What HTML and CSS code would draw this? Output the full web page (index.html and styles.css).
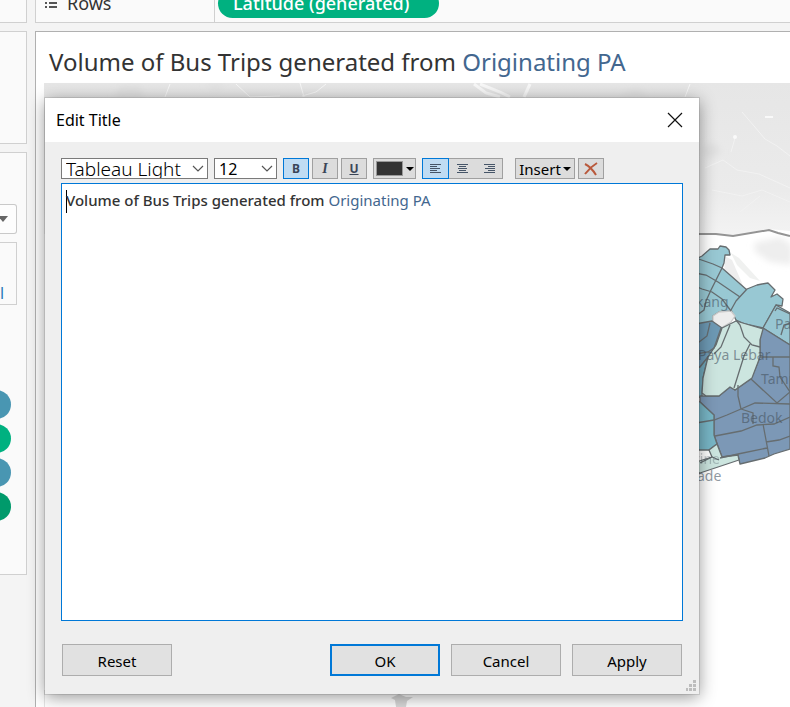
FILE: index.html
```html
<!DOCTYPE html>
<html lang="en">
<head>
<meta charset="utf-8">
<meta name="viewport" content="width=device-width, initial-scale=1">
<title>Volume of Bus Trips</title>
<link rel="stylesheet" href="styles.css">
</head>
<body>
<div class="app">
  <aside class="sidebar">
    <section class="card card-pages"></section>
    <section class="card card-filters"></section>
    <section class="card card-marks">
      <button class="mark-type" aria-label="Mark type"><svg width="10" height="6" viewBox="0 0 10 6"><path d="M0 0h10L5 6z" fill="#666"/></svg></button>
      <div class="mark-cell"><a href="#">l</a></div>
      <div class="pills">
        <span class="dot blue"></span>
        <span class="dot green"></span>
        <span class="dot blue"></span>
        <span class="dot dark"></span>
      </div>
    </section>
  </aside>
  <main class="main">
    <section class="shelf">
      <div class="shelf-label">
        <svg width="13" height="13" viewBox="0 0 13 13" fill="#555"><path d="M0 1h2v2H0zM4 1h8v2H4zM0 5h2v2H0zM4 5h8v2H4zM0 9h2v2H0zM4 9h8v2H4z"/></svg>
        <span>Rows</span>
      </div>
      <div class="shelf-content"><span class="pill">Latitude (generated)</span></div>
    </section>
    <section class="view">
      <h1 class="view-title">Volume of Bus Trips generated from <span>Originating PA</span></h1>
      <div class="map">
        <svg viewBox="44 83 746 624" preserveAspectRatio="xMinYMin slice" role="img" aria-label="Map of planning areas">
          <defs>
            <linearGradient id="land" x1="0" y1="0" x2="0" y2="1"><stop offset="0" stop-color="#e6e6e6"/><stop offset=".7" stop-color="#ebebeb"/><stop offset="1" stop-color="#f3f3f3"/></linearGradient>
            <filter id="soft"><feGaussianBlur stdDeviation="3"/></filter>
          </defs>
          <rect x="44" y="83" width="746" height="624" fill="#fff"/>
          <path d="M44 83H790V231L768 229 732 236 690 234H44z" fill="url(#land)"/>
          <g fill="#dcdcdc" filter="url(#soft)">
            <path d="M120 86h20l4 12h-30zM205 84h20l-8 6zM625 92l12-4 12 8h-30zM702 148l12-6 8 10-14 8z" fill="#e0e0e0"/>
            <path d="M754 243l26-6 12 8v20l-22-3-15-10z" fill="#eee"/>
          </g>
          <g fill="none" stroke="#f8f8f8">
            <path d="M170 84l-5 13M236 84l14 13 30-1M300 83l4 14M326 84l-10 8-14 4M690 84l-5 13"/>
            <path d="M474 84l12 9 14 4M480 84l20 8 10 5M530 84l-6 13" stroke-width="3"/>
            <path d="M742 112l12 14 11 13 12 7 13 10M735 138l-4 14M705 168l18-8 14 10 22 4 31 14M712 190l30 6 20-6 28 12M740 212l20-16" stroke="#f2f2f2"/>
          </g>
          <path d="M765 117h8" stroke="#f9f9f9" stroke-width="2"/>
          <circle cx="735" cy="137" r="2" fill="#fafafa"/>
          <path d="M690 234L716 234 733 236 769 230 778 233 790 236" fill="none" stroke="#949494" stroke-width="2"/>
          <path d="M731 253L739 258 760 281 750 278 737 265z" fill="#f0f1f0"/>
          <path d="M725 256L732 260 745 290 724 275z" fill="#eee"/>
          <g stroke="#666d70" stroke-width="1.3" stroke-linejoin="round">
            <path d="M690 262L702 256 710 249 718 249 720 246 726 247 729 250 730 255 725 255 724 263 722 268 747 290 739 299 731 311 719 312 713 316 713 322 690 328z" fill="#98c8d3"/>
            <path d="M731 310L736 301 747 289 757 285 762 284 768 283 775 290 771 297 777 294 783 299 782 306 776 305 763 328 745 324 736 320z" fill="#98c8d3"/>
            <path d="M776 305L790 313V345L763 328z" fill="#98c6d2"/>
            <path d="M713 316L719 312 731 311 735 316 731 322 721 328 713 322z" fill="#ededed" stroke="#ccc"/>
            <path d="M690 325L712 321 722 328 716 345 708 357 700 367 690 370z" fill="#6d99b4"/>
            <path d="M690 369L700 367 708 357 703 378 702 396 690 402z" fill="#72aabd"/>
            <path d="M763 328L790 345V449L774 454 765 458 740 464 738 455 722 457 714 435V415L700 402V396H719L730 387 735 390 751 379 760 357V334z" fill="#7c98b6"/>
            <path d="M722 328L736 321 763 329 760 340V357L752 378 735 390 730 387 719 396H706L702 393 703 378 708 357 716 345z" fill="#cce5df"/>
            <path d="M690 397L700 402 714 415V435L717 444 709 450H690z" fill="#78b6c6"/>
            <path d="M690 464L712 457 709 450 717 444 722 457 738 455 739 460 700 473H690z" fill="#cce5df"/>
          </g>
          <g fill="none" stroke="#666d70" stroke-width="1.3">
            <path d="M690 256L713 264 722 268 711 290 706 301 704 310 690 320M690 272L706 275 718 282 740 297M690 284L702 289 712 292 722 299 731 311"/>
            <path d="M775 311L777 308 790 314M790 323L784 325 781 335"/>
            <path d="M710 323L707 336 690 349M721 328L714 348 708 352 690 355M730 325L721 347 714 354M736 320L740 325 744 337 752 345 760 347M750 344L744 356 734 388"/>
            <path d="M760 357H773V366L779 367 780 377 790 392 777 403 751 379M773 357H790M738 385V396L741 409M690 424L714 420 727 415 741 409 755 403 790 404M715 436L741 431 757 425 774 424 790 417M741 409L753 413V424M763 424L769 456M766 442L779 440 790 436M720 458L738 454 767 448M700 463L712 457 719 460"/>
          </g>
          <g class="map-label">
            <text x="696" y="307">kang</text>
            <text x="775" y="329">Pa</text>
            <text x="698" y="360">Paya Lebar</text>
            <text x="761" y="384">Tamp</text>
            <text x="741" y="423">Bedok</text>
            <text x="694" y="464" opacity=".5">rine</text>
            <text x="697" y="481">ade</text>
          </g>
          <path d="M391 698l8-4 7 3h7l-6 4-1 6h-10l-1-7z" fill="#d8d8d8"/>
          <path d="M44 690V707" stroke="#ccc"/>
        </svg>
      </div>
    </section>
  </main>

  <form class="dialog" role="dialog" aria-labelledby="dialog-title">
    <header class="dialog-head">
      <h2 id="dialog-title">Edit Title</h2>
      <button type="button" class="close" aria-label="Close"><svg width="16" height="16" viewBox="0 0 16 16"><path d="M1 1l14 14M15 1L1 15" stroke="#111" stroke-width="1.2"/></svg></button>
    </header>
    <div class="dialog-body">
      <div class="toolbar">
        <label class="pick font-pick">
          <select aria-label="Font"><option>Tableau Light</option></select>
          <svg width="12" height="8" viewBox="0 0 12 8"><path d="M1 1l5 5 5-5" fill="none" stroke="#555" stroke-width="1.2"/></svg>
        </label>
        <label class="pick size-pick">
          <select aria-label="Size"><option>12</option></select>
          <svg width="12" height="8" viewBox="0 0 12 8"><path d="M1 1l5 5 5-5" fill="none" stroke="#555" stroke-width="1.2"/></svg>
        </label>
        <button type="button" class="tool on bold" aria-pressed="true">B</button>
        <button type="button" class="tool italic">I</button>
        <button type="button" class="tool underline">U</button>
        <button type="button" class="tool color" aria-label="Color"><span class="swatch"></span><svg width="8" height="4" viewBox="0 0 8 4"><path d="M0 0h8L4 4z"/></svg></button>
        <div class="align">
          <button type="button" class="tool on" aria-label="Align left"><svg width="11" height="10" viewBox="0 0 11 10"><path d="M0 .5h11M0 2.5h7M0 4.5h10M0 6.5h7M0 8.5h11" stroke="#465568"/></svg></button>
          <button type="button" class="tool" aria-label="Align center"><svg width="11" height="10" viewBox="0 0 11 10"><path d="M0 .5h11M2 2.5h7M1 4.5h9M2 6.5h7M0 8.5h11" stroke="#465568"/></svg></button>
          <button type="button" class="tool" aria-label="Align right"><svg width="11" height="10" viewBox="0 0 11 10"><path d="M0 .5h11M4 2.5h7M1 4.5h10M4 6.5h7M0 8.5h11" stroke="#465568"/></svg></button>
        </div>
        <button type="button" class="tool insert">Insert<svg width="8" height="4" viewBox="0 0 8 4"><path d="M0 0h8L4 4z"/></svg></button>
        <button type="button" class="tool" aria-label="Clear"><svg width="14" height="14" viewBox="0 0 14 14"><path d="M1 2C5 4 9 8 12 13M13 1C8 4 4 8 1 12" fill="none" stroke="#b9593c" stroke-width="2"/></svg></button>
      </div>
      <div class="editor" role="textbox" aria-label="Title text" contenteditable="true" spellcheck="false"><i class="caret"></i>Volume of Bus Trips generated from <span>Originating PA</span></div>
      <footer class="actions">
        <button type="button" class="btn reset">Reset</button>
        <button type="submit" class="btn primary">OK</button>
        <button type="button" class="btn">Cancel</button>
        <button type="button" class="btn">Apply</button>
      </footer>
    </div>
    <svg class="grip" width="10" height="11" viewBox="0 0 10 11" fill="#bdbdbd"><path d="M7 0h3v3H7zM3 4h3v3H3zM7 4h3v3H7zM0 8h2v3H0zM3 8h3v3H3zM7 8h3v3H7z"/></svg>
  </form>
</div>
</body>
</html>
```
FILE: styles.css
```css
* { box-sizing: border-box; }
body {
  margin: 0;
  font-family: "Noto Sans", "Open Sans", sans-serif;
  color: #333;
}
button, select { font: inherit; color: inherit; margin: 0; }
.app {
  position: relative;
  display: grid;
  grid-template-columns: 27px minmax(0, 1fr);
  gap: 8px;
  height: 100vh;
  overflow: hidden;
  background: #f4f4f4;
}
.sidebar { display: flex; flex-direction: column; gap: 8px; }
.card {
  background: #fafafa;
  border: 1px solid #d0d0d0;
  border-left: 0;
}
.card-pages { height: 23px; border-top: 0; }
.card-filters { height: 113px; }
.card-marks { height: 423px; padding-top: 51px; }
.mark-type {
  display: flex;
  align-items: center;
  justify-content: flex-end;
  width: 17px;
  height: 30px;
  padding: 0 8px 0 0;
  background: #fdfdfd;
  border: 1px solid #c9c9c9;
  border-left: 0;
  border-radius: 0 3px 3px 0;
}
.mark-type svg { flex: none; }
.mark-cell {
  display: flex;
  align-items: flex-end;
  width: 17px;
  height: 63px;
  margin-top: 8px;
  border: 1px solid #d0d0d0;
  border-left: 0;
  font-size: 16px;
}
.mark-cell a { color: #2a7ab8; text-decoration: none; }
.pills { display: flex; flex-direction: column; gap: 5px; margin: 85px 0 0 -18px; }
.dot { width: 29px; height: 29px; border-radius: 50%; }
.blue { background: #4996b2; }
.green { background: #00b180; }
.dark { background: #009a6b; }

.main { display: flex; flex-direction: column; gap: 8px; min-width: 0; }
.shelf {
  display: flex;
  align-items: flex-end;
  height: 23px;
  flex: none;
  border: 1px solid #d0d0d0;
  border-width: 0 0 1px 1px;
  background: #fafafa;
  font-size: 18px;
  line-height: 29px;
  overflow: hidden;
}
.shelf-label {
  display: flex;
  align-items: center;
  gap: 9px;
  width: 179px;
  height: 38px;
  padding-left: 9px;
  border-right: 1px solid #d0d0d0;
}
.shelf-content { padding: 0 3px 4px; }
.pill {
  display: block;
  padding: 0 30px 0 15px;
  border-radius: 15px;
  background: #00b180;
  color: #fff;
  font-weight: 500;
}
.view {
  display: flex;
  flex-direction: column;
  flex: 1;
  min-height: 0;
  padding-left: 8px;
  background: #fff;
  border: 1px solid #b0b0b0;
  border-width: 1px 0 0 1px;
}
.view-title {
  margin: 0;
  padding: 13px 5px 5px;
  font-size: 24px;
  line-height: 33px;
  font-weight: 400;
  white-space: nowrap;
}
.view-title span { color: #43678f; }
.map { flex: 1; min-height: 0; overflow: hidden; }
.map svg { display: block; width: 100%; height: 100%; }
.map-label { font-size: 14px; fill: #46535f; fill-opacity: .6; }

.dialog {
  position: absolute;
  inset: 98px 91px 13px 45px;
  display: flex;
  flex-direction: column;
  background: #efefef;
  box-shadow: 0 0 0 1px rgba(0, 0, 0, .1), 0 3px 16px rgba(0, 0, 0, .42);
  color: #000;
  font-size: 16px;
}
.dialog-head {
  display: flex;
  align-items: center;
  justify-content: space-between;
  height: 44px;
  padding: 0 16px 0 11px;
  background: #fff;
}
.dialog-head h2 { margin: 0; font-size: 16px; font-weight: 400; }
.close { display: flex; padding: 0; border: 0; background: none; }
.dialog-body {
  display: flex;
  flex-direction: column;
  flex: 1;
  min-height: 0;
  padding: 16px 16px 18px;
}
.toolbar { display: flex; gap: 3px; height: 21px; margin-bottom: 4px; }
.pick {
  display: flex;
  align-items: center;
  padding: 0 3px 0 4px;
  margin-right: 3px;
  background: #fff;
  border: 1px solid #7a7a7a;
  overflow: hidden;
}
.pick select {
  flex: 1;
  min-width: 0;
  padding: 0;
  border: 0;
  background: none;
  appearance: none;
}
.pick svg { flex: none; }
.font-pick { width: 147px; }
.font-pick select { font-size: 19px; font-weight: 300; line-height: 20px; }
.size-pick { width: 63px; }
.tool {
  display: flex;
  align-items: center;
  justify-content: center;
  width: 26px;
  padding: 0;
  background: #dcdcdc;
  border: 1px solid #a0a0a0;
  color: #3a4557;
  font-size: 12px;
  font-weight: 700;
}
.tool.on { background: #c0dcf3; border-color: #0078d7; }
.italic { font-family: "Liberation Serif", serif; font-style: italic; font-size: 14px; }
.underline { text-decoration: underline; }
.color { gap: 3px; width: 43px; margin: 0 3px; }
.swatch { width: 27px; height: 15px; background: #333; border: 1px solid #999; }
.align { display: flex; margin-right: 9px; }
.align .tool { width: 27px; border-width: 1px 0; }
.align .tool.on { border-width: 1px; }
.align .tool:last-child { border-right-width: 1px; }
.insert { gap: 2px; width: 60px; color: #000; font-size: 15px; font-weight: 400; }
.editor {
  flex: 1;
  min-height: 0;
  padding: 4px;
  background: #fff;
  border: 1px solid #0078d7;
  outline: 0;
  color: #333;
  font-size: 15px;
  font-weight: 500;
  line-height: 24px;
}
.editor span { color: #43678f; font-weight: 400; }
.caret {
  display: inline-block;
  width: 1px;
  height: 23px;
  margin-right: -1px;
  background: #000;
  vertical-align: middle;
}
.actions { display: flex; gap: 11px; padding: 23px 1px 0; }
.btn {
  width: 110px;
  height: 32px;
  padding: 1px 0 0;
  background: #e1e1e1;
  border: 1px solid #adadad;
  font-size: 15px;
}
.primary { border: 2px solid #0078d7; }
.reset { margin-right: auto; }
.grip { position: absolute; right: 3px; bottom: 3px; }
```
